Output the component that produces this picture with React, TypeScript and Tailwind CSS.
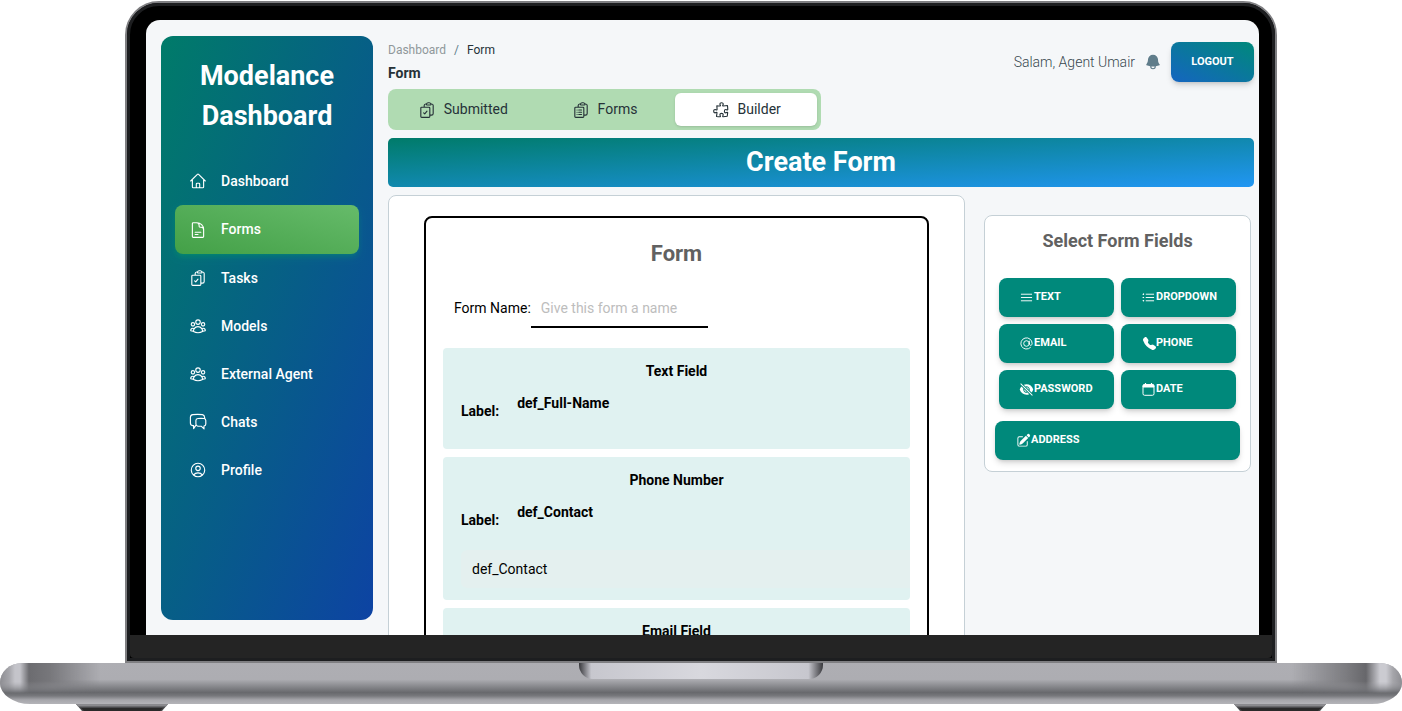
import React, { type ReactNode } from "react";
import {
  HiOutlineHome,
  HiOutlineDocumentText,
  HiOutlineClipboardDocumentCheck,
  HiOutlineClipboardDocumentList,
  HiOutlineUserGroup,
  HiOutlineUserCircle,
  HiOutlinePuzzlePiece,
  HiOutlineBars3,
  HiOutlineListBullet,
  HiOutlineAtSymbol,
  HiEyeSlash,
  HiPencilSquare,
  HiBell,
} from "react-icons/hi2";
import { BsTelephoneFill } from "react-icons/bs";

function ChatIcon({ className }: { className?: string }) {
  return (
    <svg
      viewBox="0 0 18 18"
      fill="none"
      stroke="currentColor"
      strokeWidth="1.15"
      strokeLinecap="round"
      strokeLinejoin="round"
      className={className}
      aria-hidden="true"
    >
      <path d="M6.8 12.4 4.6 15.6V12.6H3.6C2.2 12.4 1.4 11.4 1.4 10V4.2C1.4 2.7 2.3 1.8 3.8 1.6Q8.7 1.1 13.4 1.6C14.7 1.8 15.5 2.6 15.6 4.4V5.4" />
      <path d="M8.9 5.5Q12 5.2 15 5.5C16.2 5.6 16.8 6.3 16.8 7.4V11C16.8 12.2 16.1 12.8 15 13V15.9L12.2 13.2H8.8C7.6 13 6.9 12.3 6.9 11.1V7.4C6.9 6.3 7.7 5.6 8.9 5.5Z" />
    </svg>
  );
}

function CalendarIcon({ className }: { className?: string }) {
  return (
    <svg viewBox="0 0 15 15" fill="none" stroke="currentColor" className={className} aria-hidden="true">
      <rect x="2" y="3" width="11" height="10.3" rx="1.6" />
      <path d="M2 3.6A1 1 0 0 1 3 2.6H12A1 1 0 0 1 13 3.6V5H2Z" fill="currentColor" />
      <path d="M4.5 1V3M10.5 1V3" strokeWidth="1.2" />
    </svg>
  );
}

const navItems = [
  { label: "Dashboard", icon: HiOutlineHome },
  { label: "Forms", icon: HiOutlineDocumentText, active: true },
  { label: "Tasks", icon: HiOutlineClipboardDocumentCheck },
  { label: "Models", icon: HiOutlineUserGroup },
  { label: "External Agent", icon: HiOutlineUserGroup },
  { label: "Chats", icon: ChatIcon },
  { label: "Profile", icon: HiOutlineUserCircle },
];

const fieldTypes = [
  { label: "TEXT", icon: HiOutlineBars3 },
  { label: "DROPDOWN", icon: HiOutlineListBullet },
  { label: "EMAIL", icon: HiOutlineAtSymbol },
  { label: "PHONE", icon: BsTelephoneFill },
  { label: "PASSWORD", icon: HiEyeSlash },
  { label: "DATE", icon: CalendarIcon },
];

function Sidebar() {
  return (
    <aside className="flex w-[212px] shrink-0 flex-col rounded-xl bg-linear-to-br/srgb from-[#007b69] to-[#0d43a3] px-[14px] pt-5">
      <h1 className="text-center text-[27px] leading-10 font-bold text-white">
        Modelance
        <br />
        Dashboard
      </h1>
      <nav className="mt-[21px] flex flex-col">
        {navItems.map(({ label, icon: Icon, active }) => (
          <a
            key={label}
            href="#"
            className={
              active
                ? "flex h-[49px] items-center gap-[14px] rounded-lg bg-linear-to-tr/srgb from-[#43a047] to-[#66bb6a] px-[14px] text-[14px] font-medium text-white shadow-md shadow-green-500/20"
                : "flex h-12 items-center gap-[14px] rounded-lg px-[14px] text-[14px] font-medium text-white"
            }
          >
            <Icon className="size-[18px]" />
            {label}
          </a>
        ))}
      </nav>
    </aside>
  );
}

function TopBar() {
  return (
    <header className="flex items-start justify-between">
      <div>
        <nav aria-label="Breadcrumb" className="flex gap-2 text-[12px] leading-5">
          <a href="#" className="text-[#90979b]">
            Dashboard
          </a>
          <span className="text-[#607d8b]">/</span>
          <span className="text-[#263238]">Form</span>
        </nav>
        <h2 className="mt-[3px] text-sm leading-5 font-bold text-[#263238]">Form</h2>
      </div>
      <div className="mt-[2px] flex items-center">
        <span className="text-[14px] font-light text-[#37474f]">Salam, Agent Umair</span>
        <HiBell className="mx-[9px] size-[18px] text-[#607d8b]" />
        <button className="h-10 w-[83px] rounded-lg bg-linear-to-tr/srgb from-[#1565c0] to-[#00897b] text-[11px] font-bold text-white shadow-md shadow-black/15">
          LOGOUT
        </button>
      </div>
    </header>
  );
}

function Tabs() {
  return (
    <div role="tablist" className="flex h-[41px] w-[433px] rounded-lg bg-[#b0dbb2] p-1 text-[14px] text-[#263238]">
      <button role="tab" aria-selected="false" className="flex flex-1 items-center justify-center gap-2">
        <HiOutlineClipboardDocumentCheck className="size-[18px]" />
        Submitted
      </button>
      <button role="tab" aria-selected="false" className="flex flex-1 items-center justify-center gap-2">
        <HiOutlineClipboardDocumentList className="size-[18px]" />
        Forms
      </button>
      <button
        role="tab"
        aria-selected="true"
        className="flex flex-1 items-center justify-center gap-2 rounded-md bg-white shadow-sm"
      >
        <HiOutlinePuzzlePiece className="size-[18px]" />
        Builder
      </button>
    </div>
  );
}

function FieldCard({ title, label, children }: { title: string; label?: string; children?: ReactNode }) {
  return (
    <section className="rounded-[4px] bg-[#e0f2f1] pt-[11px] pb-3 pl-[18px]">
      <h4 className="pr-[18px] text-center text-sm leading-6 font-bold">{title}</h4>
      {label && (
        <div className="flex gap-[18px] text-sm leading-5 font-bold">
          <span className="mt-[18px]">Label:</span>
          <span className="mt-[10px] mb-6">{label}</span>
        </div>
      )}
      {children}
    </section>
  );
}

function FormBuilder() {
  return (
    <section className="min-w-0 flex-1 rounded-lg border border-[#c5d0d6] bg-white px-[35px] pt-5">
      <div className="rounded-lg border-2 border-black px-[17px] pt-5 text-black">
        <h3 className="text-center text-[22px] leading-8 font-bold text-[#616161]">Form</h3>
        <div className="mt-5 ml-[11px] flex items-start text-[14px]">
          <label htmlFor="form-name" className="leading-9">
            Form Name:
          </label>
          <input
            id="form-name"
            placeholder="Give this form a name"
            className="h-[38px] w-[177px] border-b-2 border-black px-[10px] text-[14px] outline-none placeholder:text-[#bdbdbd]"
          />
        </div>
        <div className="mt-5 flex flex-col gap-2">
          <FieldCard title="Text Field" label="def_Full-Name" />
          <FieldCard title="Phone Number" label="def_Contact">
            <input
              aria-label="def_Contact"
              defaultValue="def_Contact"
              className="mt-1 block h-[38px] w-full rounded-l-md bg-[#e4f0ef] px-[11px] text-[14px] outline-none"
            />
          </FieldCard>
          <FieldCard title="Email Field" />
        </div>
      </div>
    </section>
  );
}

function FieldPalette() {
  return (
    <aside className="mt-5 mr-[3px] w-[267px] shrink-0 self-start rounded-lg border border-[#c5d0d6] bg-white px-[10px] pt-[9px] pb-[11px]">
      <h3 className="text-center text-lg leading-8 font-bold text-[#616161]">Select Form Fields</h3>
      <div className="mx-1 mt-[21px] grid grid-cols-2 gap-[7px]">
        {fieldTypes.map(({ label, icon: Icon }) => (
          <button
            key={label}
            className="flex h-[39px] items-center rounded-lg bg-[#00897b] pl-5 text-[11px] font-bold text-white shadow-md shadow-black/15"
          >
            <Icon className={label === "PHONE" ? "ml-0.5 size-[13px]" : "size-[15px]"} />
            {label}
          </button>
        ))}
      </div>
      <button className="mt-3 flex h-[39px] w-full items-center rounded-lg bg-[#00897b] pl-[21px] text-[11px] font-bold text-white shadow-md shadow-black/15">
        <HiPencilSquare className="size-[15px]" />
        ADDRESS
      </button>
    </aside>
  );
}

function LaptopFoot() {
  return (
    <svg viewBox="0 0 92 7" className="h-[7px] w-[92px]" aria-hidden="true">
      <path d="M0 0H92L86 7H6Z" fill="#4a4a4d" />
      <path d="M0 0H92L90 2.5H2Z" fill="#8a8a8e" />
      <path d="M5 4H87L84 7H8Z" fill="#2a2929" />
    </svg>
  );
}

function LaptopBase() {
  return (
    <div className="shrink-0">
      <div className="relative flex h-[41px] justify-center overflow-hidden rounded-[22px_22px_30px_30px/20px_20px_21px_21px] bg-[linear-gradient(to_bottom,#aeaeb3_0%,#adadb2_40%,#68696d_72%,#77787c_80%,#a6a6ab_90%,#b4b4b8_100%)]">
        <div className="absolute inset-y-0 left-0 w-[100px] bg-[linear-gradient(to_right,#8d8d92_0px,#a5a5aa_9px,#c4c4ca_15px,#c4c4ca_20px,#6c6c70_29px,#77777b_50px,transparent_100px)] mask-[linear-gradient(to_bottom,black_45%,transparent_75%)]" />
        <div className="absolute inset-y-0 right-0 w-[110px] bg-[linear-gradient(to_left,#8d8d92_0px,#a5a5aa_9px,#cbcbd1_16px,#cbcbd1_22px,#67676b_36px,#7b7b7f_55px,transparent_110px)] mask-[linear-gradient(to_bottom,black_45%,transparent_75%)]" />
        <div className="h-4 w-[244px] rounded-b-[14px] bg-[linear-gradient(to_right,#38383c_0%,#c7c7ce_5%,#d8d8de_50%,#c7c7ce_94%,#38383c_100%)]" />
      </div>
      <div className="flex justify-between px-[76px]">
        <LaptopFoot />
        <LaptopFoot />
      </div>
    </div>
  );
}

export default function App() {
  return (
    <div className="flex h-screen flex-col overflow-hidden bg-white pt-px font-['Roboto',sans-serif]">
      <div className="mx-[125px] flex min-h-0 flex-1 flex-col rounded-t-[34px] border-2 border-[#7f7f82] bg-black">
        <div className="flex min-h-0 flex-1 flex-col rounded-t-[32px] border-3 border-[#1d1e20]">
          <div className="mt-[14px] mr-[13px] ml-4 flex min-h-0 flex-1 gap-[15px] overflow-hidden rounded-t-[14px] bg-[#f5f7f9] pt-4 pr-[5px] pl-[15px]">
            <div className="flex pb-[15px]">
              <Sidebar />
            </div>
            <main className="flex min-w-0 flex-1 flex-col pt-1">
              <TopBar />
              <div className="mt-[6px]">
                <Tabs />
              </div>
              <h2 className="mt-2 h-[49px] shrink-0 rounded-[5px] bg-linear-to-br/srgb from-[#007b69] to-[#2196f3] text-center text-[27px] leading-[49px] font-bold text-white">
                Create Form
              </h2>
              <div className="mt-2 flex gap-[19px]">
                <FormBuilder />
                <FieldPalette />
              </div>
            </main>
          </div>
          <div className="h-[23px] shrink-0 rounded-b-[4px] bg-[#242424]" />
        </div>
      </div>
      <LaptopBase />
    </div>
  );
}
